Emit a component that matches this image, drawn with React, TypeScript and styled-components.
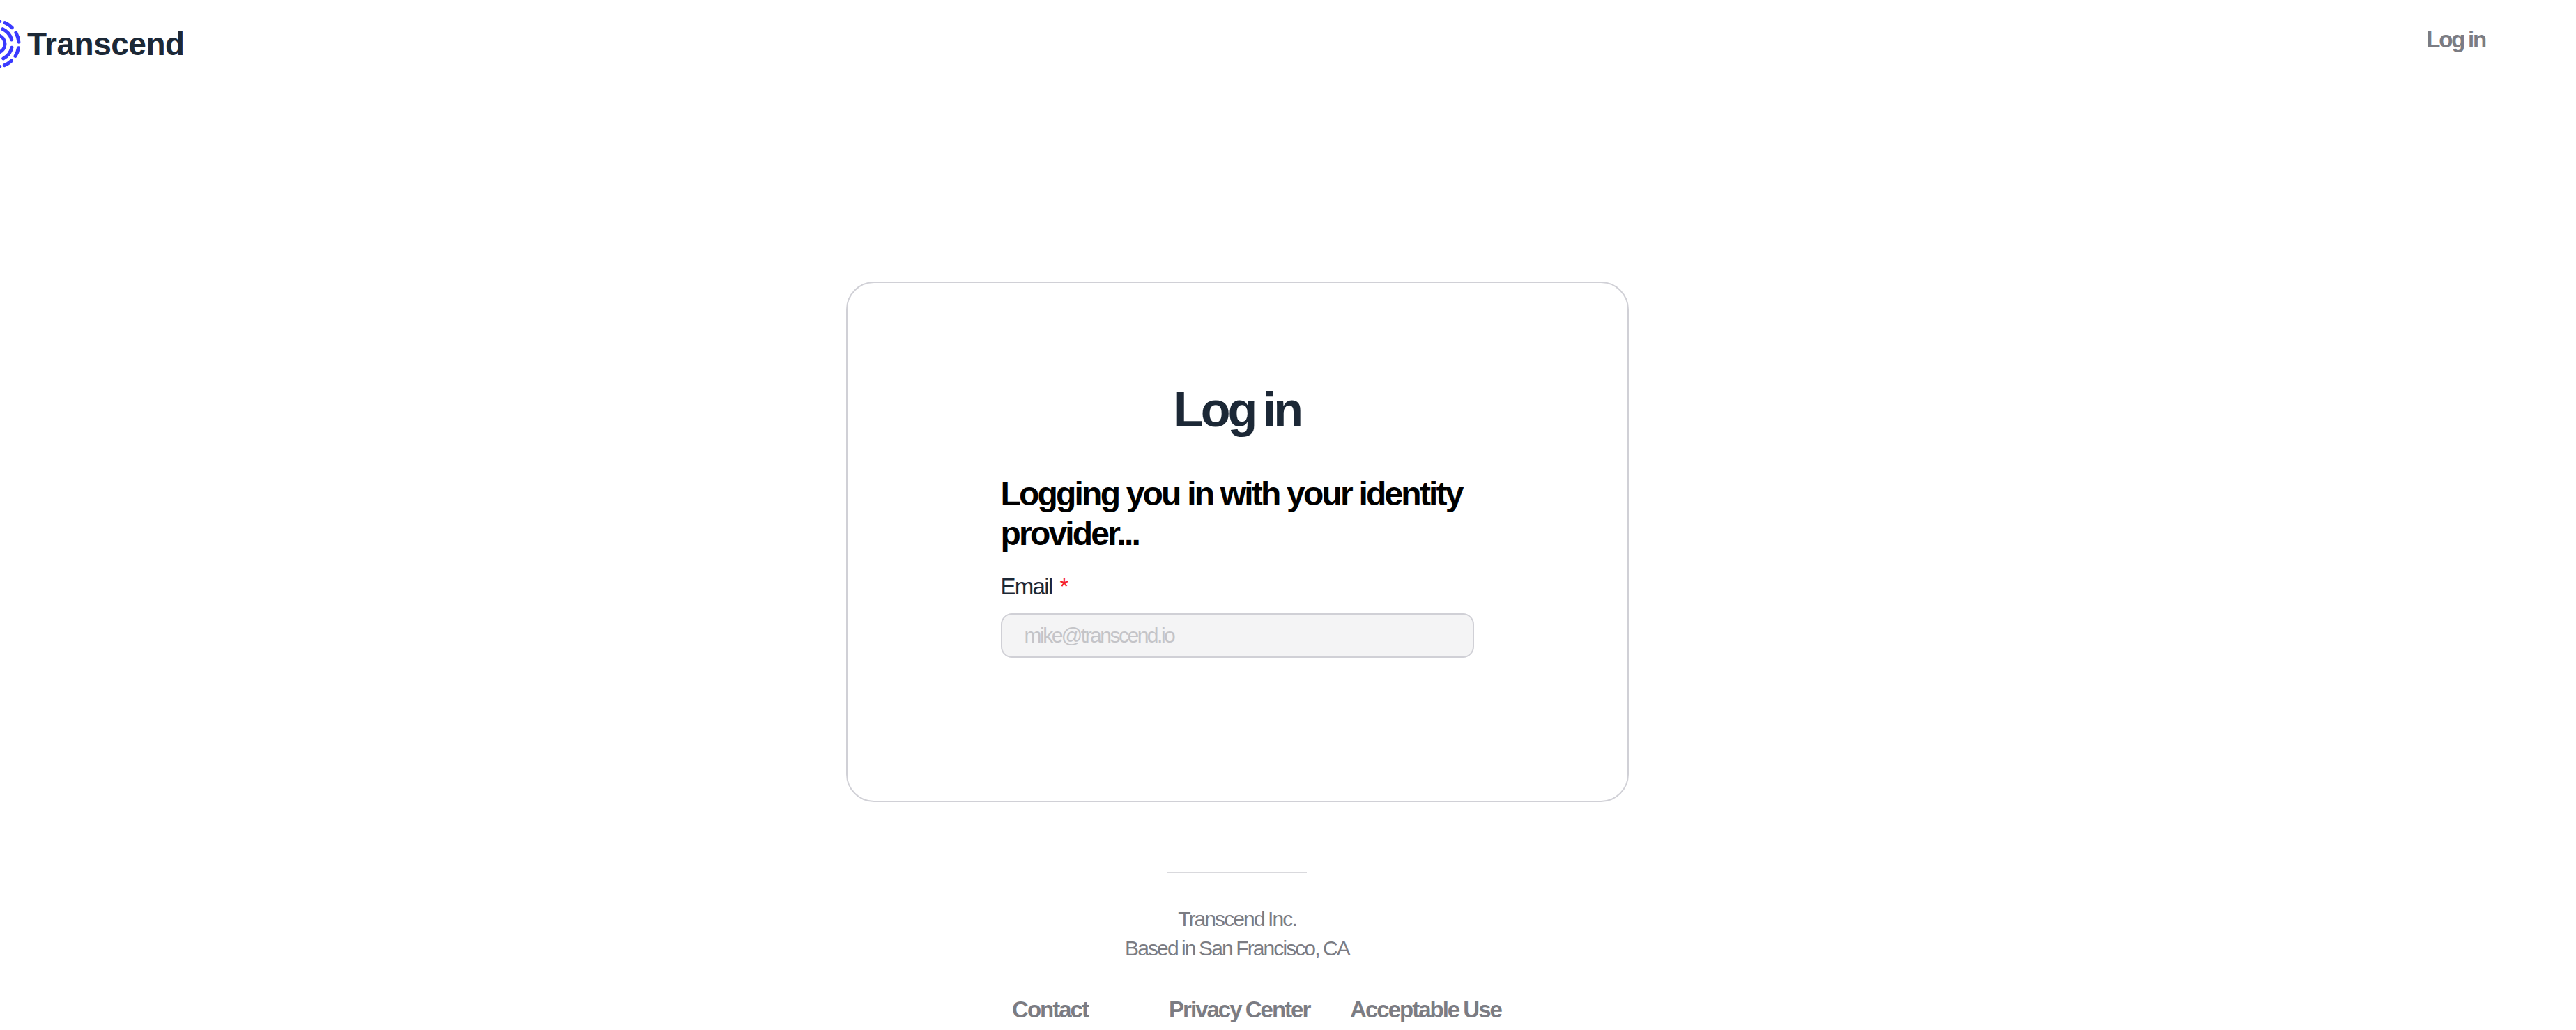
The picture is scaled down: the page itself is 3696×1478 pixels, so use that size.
import styled, { createGlobalStyle } from 'styled-components';

const GlobalStyle = createGlobalStyle`
  html, body {
    margin: 0;
    padding: 0;
    background: #fff;
    font-family: 'Liberation Sans', Arial, sans-serif;
  }
`;

const Page = styled.div`
  height: 1478px;
  width: 3696px;
  overflow: hidden;
  display: flex;
  flex-direction: column;
`;

const Header = styled.header`
  height: 404px;
  flex: none;
  display: flex;
  align-items: flex-start;
  justify-content: space-between;
  padding-right: 130px;
`;

const Brand = styled.div`
  display: flex;
  align-items: center;
  height: 126px;
  gap: 3px;
`;

const BrandName = styled.span`
  font-size: 46px;
  font-weight: 700;
  letter-spacing: -0.5px;
  color: #1c2836;
`;

const HeaderLink = styled.a`
  margin-top: 36px;
  font-size: 33px;
  line-height: 42px;
  font-weight: 700;
  letter-spacing: -2.2px;
  word-spacing: -1px;
  color: #7b7c83;
`;

const Content = styled.div`
  display: flex;
  flex-direction: column;
  align-items: center;
  padding-right: 146px;
`;

const Card = styled.main`
  flex: none;
  width: 1123px;
  height: 747px;
  box-sizing: border-box;
  padding: 140px 220px 0;
  border: 2px solid #d0d0d6;
  border-radius: 40px;
  display: flex;
  flex-direction: column;
`;

const Title = styled.h1`
  margin: 0 0 50px;
  font-size: 70px;
  line-height: 84px;
  font-weight: 700;
  letter-spacing: -4px;
  word-spacing: -4px;
  text-align: center;
  color: #1c2836;
`;

const Subtitle = styled.h2`
  margin: 0 0 28px;
  font-size: 48px;
  line-height: 57px;
  font-weight: 700;
  letter-spacing: -2.8px;
  color: #000;
`;

const FieldLabel = styled.label`
  display: block;
  margin-bottom: 18px;
  font-size: 33px;
  line-height: 40px;
  letter-spacing: -1.7px;
  color: #1c2836;
`;

const Required = styled.span`
  margin-left: 11px;
  color: #f5222d;
`;

const EmailInput = styled.input`
  display: block;
  width: 100%;
  height: 64px;
  box-sizing: border-box;
  padding: 0 32px;
  border: 2px solid #d0d0d6;
  border-radius: 16px;
  background: #f4f4f5;
  font-family: inherit;
  font-size: 30px;
  letter-spacing: -2.5px;

  &::placeholder {
    color: #c4c4c8;
    opacity: 1;
  }
`;

const Footer = styled.footer`
  display: flex;
  flex-direction: column;
  align-items: center;
  margin-top: 100px;
`;

const Rule = styled.hr`
  width: 200px;
  height: 1px;
  margin: 0 0 46px;
  border: 0;
  background: #d9d9dd;
`;

const Address = styled.div`
  font-size: 30px;
  line-height: 42px;
  letter-spacing: -1.9px;
  word-spacing: -1px;
  text-align: center;
  color: #7b7c83;
`;

const FooterLinks = styled.nav`
  display: grid;
  grid-template-columns: 225px 260px auto;
  margin-top: 46px;
  padding-left: 56px;
`;

const FooterLink = styled.a`
  font-size: 33px;
  line-height: 42px;
  font-weight: 700;
  letter-spacing: -2px;
  word-spacing: -1px;
  color: #7b7c83;
`;

// the rings are centred just off the left edge of the page, so only the right side shows
const CX = -6;
const CY = 63;

const arc = (r: number, from: number, to: number) => {
  const pt = (deg: number) => {
    const a = (deg * Math.PI) / 180;
    return `${(CX + r * Math.cos(a)).toFixed(2)} ${(CY + r * Math.sin(a)).toFixed(2)}`;
  };
  return `M${pt(from)}A${r} ${r} 0 0 1 ${pt(to)}`;
};

const LOGO_ARCS: [number, number, number][] = [
  [33, -88, -80],
  [33, -67, -45],
  [33, -29, -5],
  [33, 10, 32],
  [33, 47, 68],
  [33, 80, 88],
  [23.5, -65, -15],
  [23.5, 13, 63],
  [13, -70, 70],
];

const LogoMark = () => (
  <svg width="36" height="84" viewBox="0 21 36 84" fill="none" stroke="#3a3aff" strokeWidth="5" strokeLinecap="round">
    {LOGO_ARCS.map(([r, from, to]) => (
      <path key={`${r}${from}`} d={arc(r, from, to)} />
    ))}
  </svg>
);

const App = () => (
  <>
    <GlobalStyle />
    <Page>
      <Header>
        <Brand>
          <LogoMark />
          <BrandName>Transcend</BrandName>
        </Brand>
        <HeaderLink>Log in</HeaderLink>
      </Header>
      <Content>
        <Card>
          <Title>Log in</Title>
          <Subtitle>Logging you in with your identity provider...</Subtitle>
          <FieldLabel>
            Email<Required>*</Required>
          </FieldLabel>
          <EmailInput placeholder="mike@transcend.io" />
        </Card>
        <Footer>
          <Rule />
          <Address>
            Transcend Inc.
            <br />
            Based in San Francisco, CA
          </Address>
          <FooterLinks>
            <FooterLink>Contact</FooterLink>
            <FooterLink>Privacy Center</FooterLink>
            <FooterLink>Acceptable Use</FooterLink>
          </FooterLinks>
        </Footer>
      </Content>
    </Page>
  </>
);

export default App;
